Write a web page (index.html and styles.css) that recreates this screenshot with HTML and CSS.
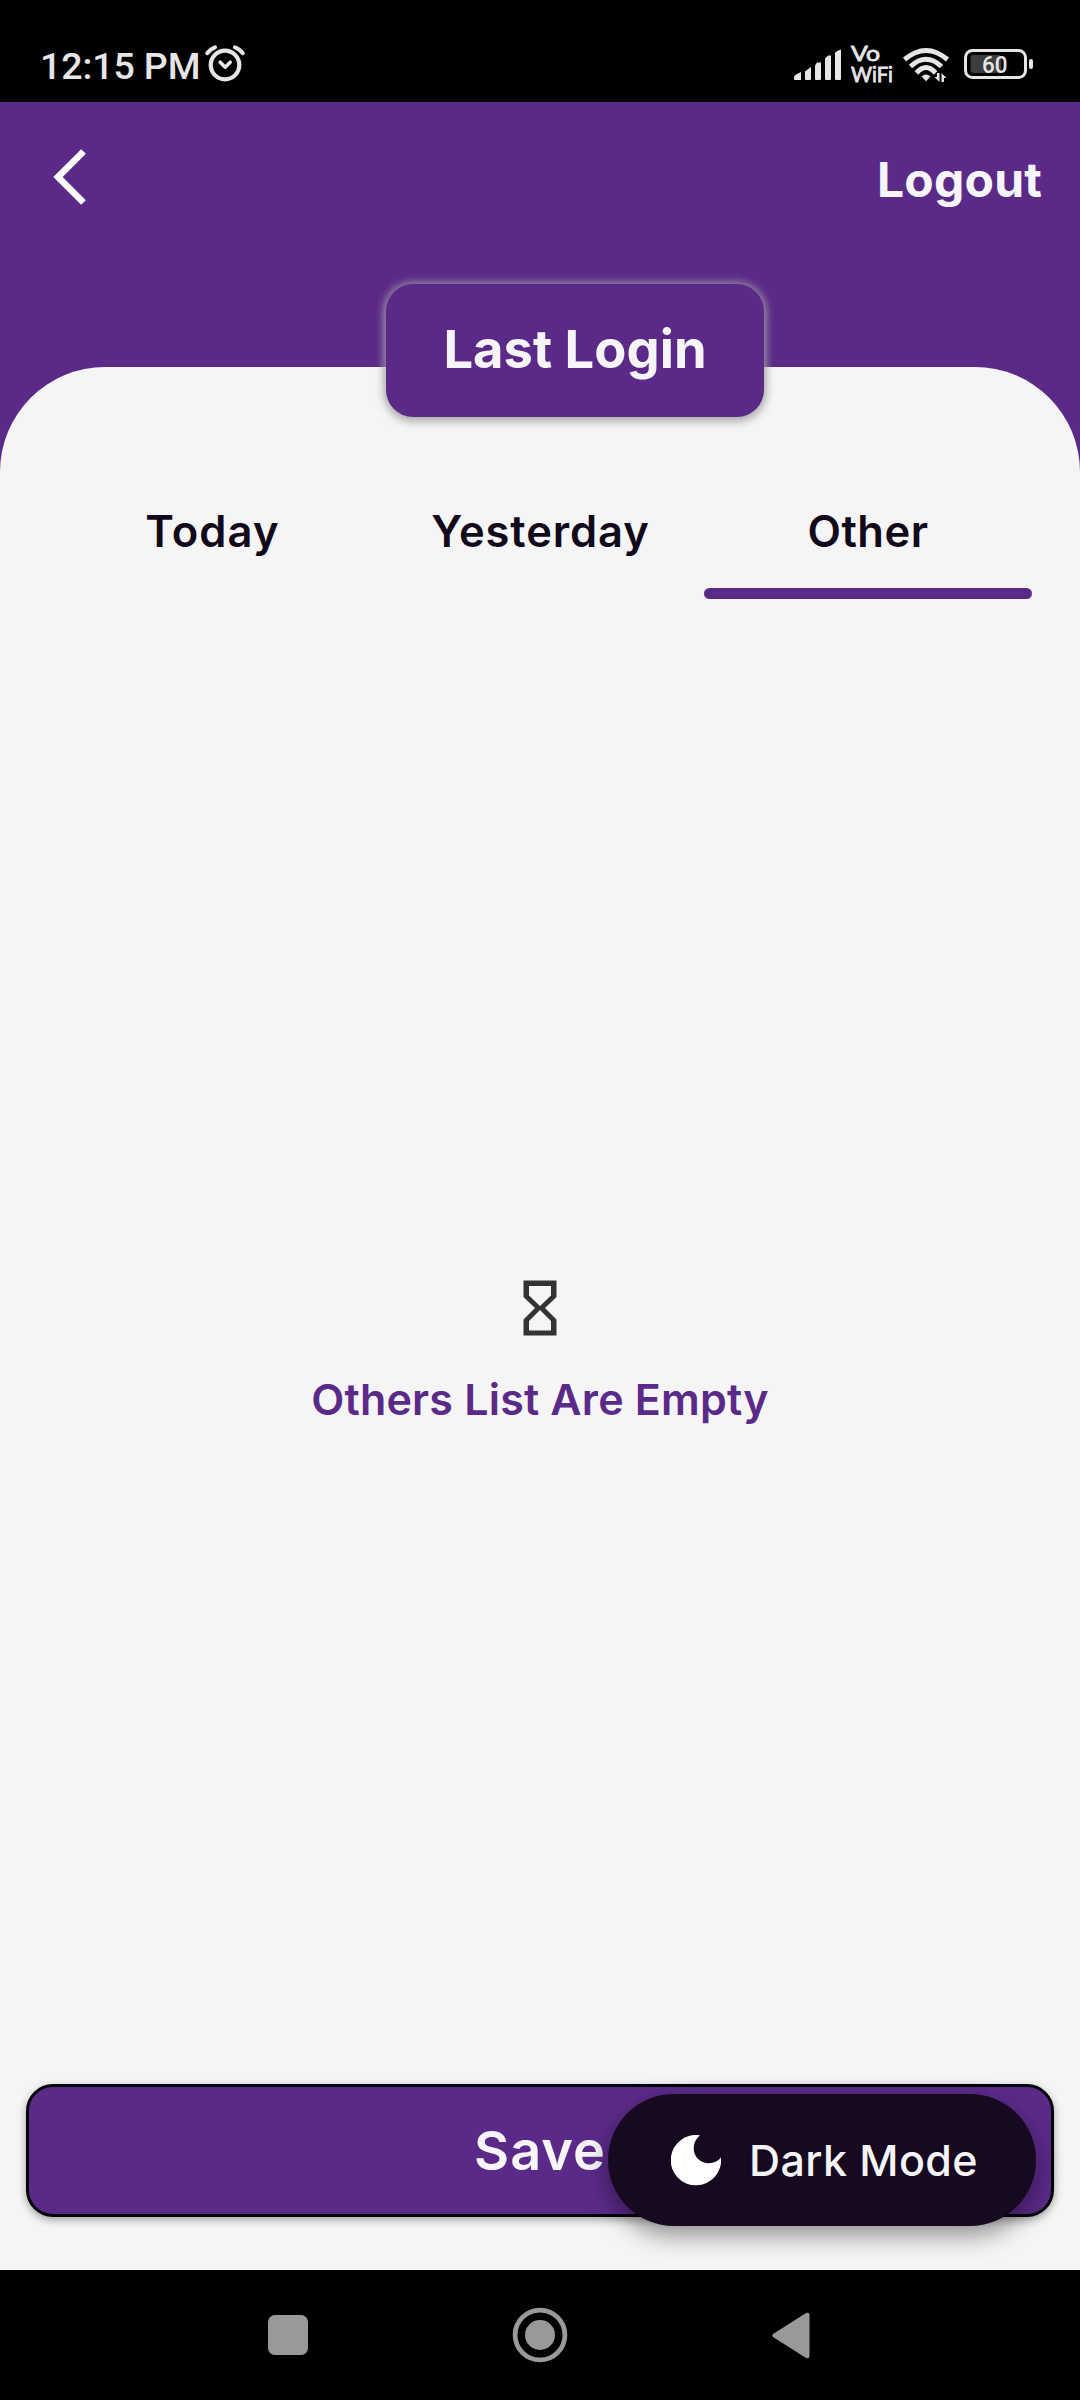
FILE: index.html
```html
<!DOCTYPE html>
<html lang="en">
<head>
<meta charset="utf-8">
<title>Last Login</title>
<link rel="stylesheet" href="styles.css">
</head>
<body>
<div class="screen">
  <div class="status">
    <span class="time">12:15 PM</span>
    <svg class="alarm" width="40" height="38" viewBox="0 0 40 38" fill="none" stroke="#e6e6e6" stroke-linecap="round">
      <circle cx="20" cy="20" r="14.3" stroke-width="4.2"/>
      <path d="M2.300 8.200Q5 4 10 2.300M37.700 8.200Q35 4 30 2.300" stroke-width="4"/>
      <path d="M15.200 17.200l5 5 5-5" stroke-width="3.600" stroke-linejoin="round"/>
    </svg>
    <svg class="indicators" width="242" height="50" viewBox="0 0 242 50">
      <g fill="#e6e6e6">
        <path d="M0 37q0-2 7-5v8H1q-1 0-1-1z"/>
        <path d="M11 31.500l6-4.500v12q0 1-1 1h-4q-1 0-1-1z"/>
        <path d="M21 25.500l2-3h4v16.500q0 1-1 1h-4q-1 0-1-1z"/>
        <path d="M31 18.500l3-3h3v23.500q0 1-1 1h-4q-1 0-1-1z"/>
        <path d="M41 13q1-2 6-3.500v29.500q0 1-1 1h-4q-1 0-1-1z"/>
      </g>
      <text class="label" x="57" y="21" textLength="29" lengthAdjust="spacingAndGlyphs">Vo</text>
      <text class="label" x="57" y="42" textLength="42" lengthAdjust="spacingAndGlyphs">WiFi</text>
      <g fill="none" stroke="#e6e6e6">
        <path d="M110.500 19.500Q132 1.500 153.500 19.500M116.500 26.500Q132 12 147.500 26.500M122.500 33Q132 22 141.500 33" stroke-width="5"/>
        <rect x="171.500" y="10.500" width="60" height="27" rx="7" stroke-width="3"/>
      </g>
      <g fill="#e6e6e6">
        <path d="M127.500 36.500q4.500-4 9 0l-4.500 4.800z"/>
        <path d="M143 33h2.500v9l-5-5h2.500zM147.500 42v-9l5 5h-2.500v4z"/>
        <rect x="235" y="19" width="4" height="10" rx="2"/>
      </g>
      <rect x="176.500" y="15" width="31" height="18" rx="3" fill="#3d3d3d"/>
      <text class="level" x="188" y="32.500" textLength="25.500" lengthAdjust="spacingAndGlyphs">60</text>
    </svg>
  </div>
  <header class="header">
    <svg width="34" height="56" viewBox="0 0 34 56" fill="none" stroke="#fff" stroke-width="6.700"><path d="M30.500 2.500L5 28l25.500 25.500"/></svg>
    <span class="logout">Logout</span>
  </header>
  <main class="sheet">
    <h1 class="badge"><span>Last Login</span></h1>
    <nav class="tabs">
      <div class="tab"><span class="today">Today</span></div>
      <div class="tab"><span class="yesterday">Yesterday</span></div>
      <div class="tab active"><span class="other">Other</span></div>
    </nav>
    <section class="empty">
      <svg width="34" height="56" viewBox="0 0 34 56"><path fill="#333" fill-rule="evenodd" d="M0.500 0.500h33v16.500L22 28l11.500 11.500V55.500h-33V39.500L12 28 0.500 17zM6 6v9.500l11 10.500 11-10.500V6zM17 30L6 41v9.500h22V41z"/></svg>
      <span class="message">Others List Are Empty</span>
    </section>
    <footer class="actions">
      <div class="save"><span>Save</span></div>
      <div class="mode">
        <svg width="50" height="51" viewBox="0 0 50 51"><path fill="#fff" d="M29 0.300A25.200 25.200 0 1 0 50 22.500C47 26.500 42 28.500 37 28.200 28 27.500 22.500 20.500 22.700 13 22.800 8 25 3.500 29 0.300Z"/></svg>
        <span>Dark Mode</span>
      </div>
    </footer>
  </main>
  <div class="navbar">
    <svg width="40" height="40" viewBox="0 0 40 40"><rect width="40" height="40" rx="7" fill="#999"/></svg>
    <svg width="56" height="56" viewBox="0 0 56 56"><circle cx="28" cy="28" r="24.900" fill="none" stroke="#999" stroke-width="4.800"/><circle cx="28" cy="28" r="15" fill="#999"/></svg>
    <svg width="38" height="47" viewBox="0 0 38 47"><path d="M1 22L34.500 .8Q37.500 0 37.500 3v41q0 3-3 2.200L1 25q-1.500-1.500 0-3z" fill="#999"/></svg>
  </div>
</div>
</body>
</html>
```
FILE: styles.css
```css
* { box-sizing: border-box; }
body { margin: 0; font-family: Inter, "Noto Sans", sans-serif; }
svg { display: block; flex: none; }
span { white-space: nowrap; }
.screen { width: 1080px; height: 2400px; display: flex; flex-direction: column; background: #5b2a89; overflow: hidden; }
.status { height: 102px; flex: none; background: #000; color: #e6e6e6; display: flex; align-items: flex-start; padding: 43px 44px 0 40px; }
.time { font: 500 37.5px/46px Roboto, sans-serif; letter-spacing: -0.1px; width: 165px; }
.alarm { margin-top: 2px; }
.indicators { margin-left: auto; margin-top: -3px; }
.label { font: 400 21px Lato, sans-serif; fill: #e6e6e6; stroke: #e6e6e6; stroke-width: .8; }
.level { font: 500 23px Roboto, sans-serif; fill: #e6e6e6; }
.header { height: 265px; flex: none; display: flex; justify-content: space-between; align-items: flex-start; padding: 47px 38px 0 53px; }
.logout { font-size: 48px; line-height: 61px; font-weight: 750; letter-spacing: 0.2px; color: #f5f5f7; }
.sheet { flex: 1; background: #f5f5f5; border-radius: 105px 105px 0 0; display: flex; flex-direction: column; }
.badge { margin: -83px 0 0 386px; width: 378px; height: 133px; flex: none; padding-bottom: 3px; border-radius: 27px; background: #5b2a89; box-shadow: 0 0 9px 2px rgba(165,165,165,.75), 0 4px 10px rgba(150,150,150,.6); display: flex; align-items: center; justify-content: center; color: #f5f5f7; font-size: 52.5px; line-height: 60px; font-weight: 750; }
.tabs { display: grid; grid-template-columns: repeat(3, 328px); padding-left: 48px; margin-top: 74px; height: 108px; flex: none; }
.tab { display: flex; justify-content: center; padding-top: 14px; font-size: 43.5px; line-height: 52px; font-weight: 600; color: #12091b; }
.today { letter-spacing: 1.1px; margin-right: -1px; }
.yesterday { letter-spacing: 0.9px; margin-right: -1px; }
.other { letter-spacing: 0.5px; }
.active { position: relative; }
.active::after { content: ""; position: absolute; left: 0; right: 0; bottom: 0; height: 11px; border-radius: 6px; background: #5b2a89; }
.empty { flex: 1; display: flex; flex-direction: column; align-items: center; padding-top: 681px; }
.message { margin-top: 37px; font-size: 43px; line-height: 52px; font-weight: 600; letter-spacing: 0.2px; color: #5b2a89; }
.actions { position: relative; height: 186px; flex: none; padding: 0 26px; }
.save { height: 133px; border: 3px solid #050309; border-radius: 27px; background: #5b2a89; box-shadow: 0 3px 9px rgba(0,0,0,.35); display: flex; align-items: center; justify-content: center; color: #f5f5f7; font-size: 54px; line-height: 60px; font-weight: 600; letter-spacing: 1px; }
.mode { position: absolute; left: 608px; top: 10px; width: 428px; height: 132px; border-radius: 66px; background: #170a20; box-shadow: 0 10px 24px rgba(0,0,0,.4); display: flex; align-items: center; padding-left: 63px; gap: 28px; color: #f5f5f7; font-size: 43px; line-height: 52px; font-weight: 500; letter-spacing: 0.4px; }
.navbar { height: 130px; flex: none; background: #000; display: flex; align-items: center; padding-left: 268px; }
.navbar svg:nth-child(2) { margin: 0 204px; }
```
